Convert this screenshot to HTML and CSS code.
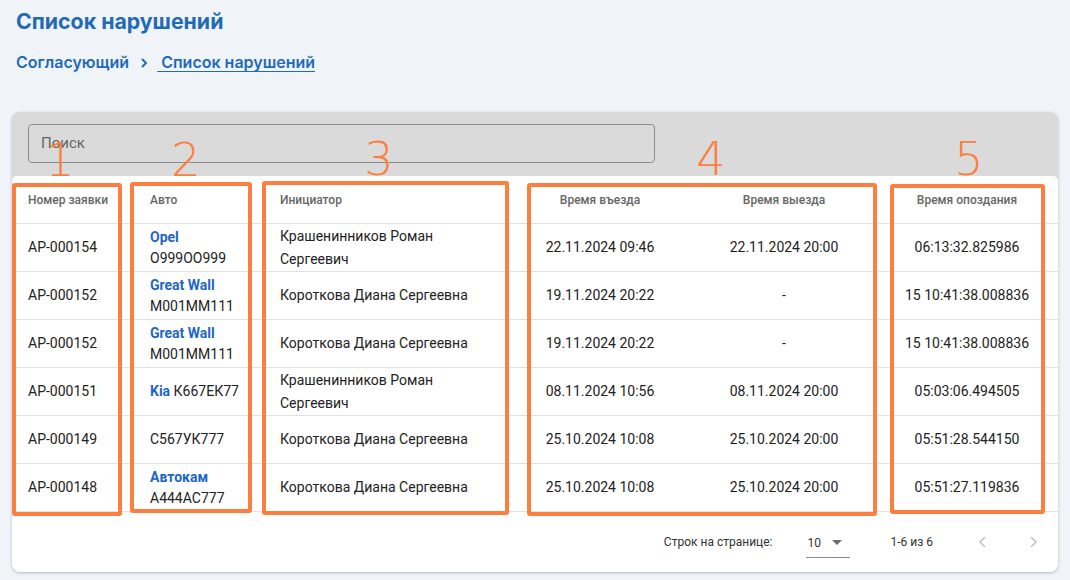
FILE: index.html
```html
<!DOCTYPE html>
<html lang="ru">
<head>
<meta charset="utf-8">
<title>Список нарушений</title>
<link rel="stylesheet" href="styles.css">
</head>
<body>
<div class="page">
  <h1 class="title">Список нарушений</h1>
  <nav class="crumbs">
    <span class="crumb">Согласующий</span>
    <svg class="crumb-sep" width="10" height="12" viewBox="0 0 10 12"><path d="M3 2 L7 6 L3 10" fill="none" stroke="#1f6bb8" stroke-width="2"/></svg>
    <span class="crumb current">&nbsp;Список нарушений</span>
  </nav>

  <section class="card">
    <div class="toolbar">
      <div class="search">Поиск</div>
    </div>
    <div class="paper">
      <table class="grid">
        <colgroup>
          <col class="c1"><col class="c2"><col class="c3"><col class="c4"><col class="c5"><col class="c6">
        </colgroup>
        <thead>
          <tr>
            <th>Номер заявки</th>
            <th>Авто</th>
            <th>Инициатор</th>
            <th class="ctr">Время въезда</th>
            <th class="ctr">Время выезда</th>
            <th class="ctr">Время опоздания</th>
          </tr>
        </thead>
        <tbody>
          <tr>
            <td>АР-000154</td>
            <td class="car"><span class="brand">Opel</span><br>О999ОО999</td>
            <td class="who">Крашенинников Роман Сергеевич</td>
            <td class="ctr">22.11.2024 09:46</td>
            <td class="ctr">22.11.2024 20:00</td>
            <td class="ctr">06:13:32.825986</td>
          </tr>
          <tr>
            <td>АР-000152</td>
            <td class="car"><span class="brand">Great Wall</span><br>М001ММ111</td>
            <td class="who">Короткова Диана Сергеевна</td>
            <td class="ctr">19.11.2024 20:22</td>
            <td class="ctr">-</td>
            <td class="ctr">15 10:41:38.008836</td>
          </tr>
          <tr>
            <td>АР-000152</td>
            <td class="car"><span class="brand">Great Wall</span><br>М001ММ111</td>
            <td class="who">Короткова Диана Сергеевна</td>
            <td class="ctr">19.11.2024 20:22</td>
            <td class="ctr">-</td>
            <td class="ctr">15 10:41:38.008836</td>
          </tr>
          <tr>
            <td>АР-000151</td>
            <td class="car"><span class="brand">Kia</span> К667ЕК77</td>
            <td class="who">Крашенинников Роман Сергеевич</td>
            <td class="ctr">08.11.2024 10:56</td>
            <td class="ctr">08.11.2024 20:00</td>
            <td class="ctr">05:03:06.494505</td>
          </tr>
          <tr>
            <td>АР-000149</td>
            <td class="car">С567УК777</td>
            <td class="who">Короткова Диана Сергеевна</td>
            <td class="ctr">25.10.2024 10:08</td>
            <td class="ctr">25.10.2024 20:00</td>
            <td class="ctr">05:51:28.544150</td>
          </tr>
          <tr>
            <td>АР-000148</td>
            <td class="car"><span class="brand">Автокам</span><br>А444АС777</td>
            <td class="who">Короткова Диана Сергеевна</td>
            <td class="ctr">25.10.2024 10:08</td>
            <td class="ctr">25.10.2024 20:00</td>
            <td class="ctr">05:51:27.119836</td>
          </tr>
        </tbody>
      </table>
      <div class="pager">
        <span class="pager-label">Строк на странице:</span>
        <div class="rows-select">
          <span>10</span>
          <svg width="10" height="5" viewBox="0 0 10 5"><path d="M0 0 L10 0 L5 5 Z" fill="#6b6b6b"/></svg>
        </div>
        <span class="pager-range">1-6 из 6</span>
        <button class="nav-btn" type="button" aria-label="Назад"><svg width="10" height="14" viewBox="0 0 10 14"><path d="M7 2 L2 7 L7 12" fill="none" stroke="#c4c4c4" stroke-width="1.6"/></svg></button>
        <button class="nav-btn" type="button" aria-label="Вперёд"><svg width="10" height="14" viewBox="0 0 10 14"><path d="M3 2 L8 7 L3 12" fill="none" stroke="#c4c4c4" stroke-width="1.6"/></svg></button>
      </div>
    </div>
  </section>

  <div class="marks">
    <div class="box b1"></div>
    <div class="box b2"></div>
    <div class="box b3"></div>
    <div class="box b4"></div>
    <div class="box b5"></div>
    <div class="num n1">1</div>
    <div class="num n2">2</div>
    <div class="num n3">3</div>
    <div class="num n4">4</div>
    <div class="num n5">5</div>
  </div>
</div>
</body>
</html>
```
FILE: styles.css
```css
html, body {
  margin: 0;
  padding: 0;
  background: #f0f4f8;
}
body {
  font-family: Roboto, "Liberation Sans", Arial, sans-serif;
  color: #222;
  width: 1070px;
  height: 580px;
  overflow: hidden;
}
.page {
  position: relative;
  padding: 6px 12px 0;
}
.title {
  margin: 0 0 0 4px;
  font-family: Inter, Roboto, sans-serif;
  font-size: 21.3px;
  line-height: 30px;
  font-weight: 700;
  color: #1f6bb8;
}
.crumbs {
  margin: 14px 0 0 4px;
  height: 24px;
  display: flex;
  align-items: center;
  font-family: Inter, Roboto, sans-serif;
  font-size: 16px;
  font-weight: 600;
  color: #1f6bb8;
}
.crumb-sep {
  margin: 2px 8px 0 10px;
}
.crumb.current {
  text-decoration: underline;
  text-underline-offset: 3px;
}
.card {
  margin-top: 38px;
  width: 1046px;
  background: #dadada;
  border-radius: 8px;
  box-shadow: 0 1px 3px rgba(0,0,0,0.25);
}
.toolbar {
  padding: 12px 16px 13px;
}
.search {
  box-sizing: border-box;
  width: 627px;
  height: 39px;
  border: 1px solid #8c8c8c;
  border-radius: 4px;
  padding-left: 12px;
  line-height: 37px;
  font-size: 15px;
  color: #666;
}
.paper {
  background: #fff;
  border-radius: 5px 5px 8px 8px;
}
.grid {
  width: 1046px;
  border-collapse: collapse;
  table-layout: fixed;
}
.c1 { width: 122px; }
.c2 { width: 130px; }
.c3 { width: 244px; }
.c4 { width: 184px; }
.c5 { width: 184px; }
.c6 { width: 182px; }
.grid th {
  height: 47px;
  padding: 0 16px;
  text-align: left;
  font-size: 12px;
  font-weight: 500;
  color: #666;
  border-bottom: 1px solid #e2e2e2;
  white-space: nowrap;
}
.grid td {
  height: 47px;
  padding: 0 16px;
  font-size: 14px;
  line-height: 23px;
  color: #222;
  border-bottom: 1px solid #e2e2e2;
}
.grid td.car {
  line-height: 21px;
}
.grid .ctr {
  text-align: center;
  padding: 0 4px;
}
.brand {
  color: #1e66c4;
  font-weight: 700;
}
.pager {
  height: 60px;
  display: flex;
  align-items: center;
  justify-content: flex-end;
  padding-right: 13px;
  font-size: 12px;
  color: #333;
}
.pager-label {
  margin-right: 34px;
}
.rows-select {
  box-sizing: border-box;
  width: 44px;
  height: 30px;
  margin-top: 2px;
  display: flex;
  align-items: center;
  justify-content: space-between;
  padding: 0 0 0 1px;
  border-bottom: 1px solid #8a8a8a;
  margin-right: 40px;
}
.rows-select svg {
  margin-right: 8px;
}
.pager-range {
  margin-right: 38px;
}
.nav-btn {
  width: 24px;
  height: 24px;
  padding: 0;
  border: 0;
  background: none;
  display: flex;
  align-items: center;
  justify-content: center;
}
.nav-btn + .nav-btn {
  margin-left: 26px;
}
.marks {
  position: absolute;
  left: 0;
  top: 0;
  width: 1070px;
  height: 580px;
  pointer-events: none;
}
.box {
  position: absolute;
  box-sizing: border-box;
  border: 4px solid #fd7e3e;
  border-radius: 3px;
}
.b1 { left: 12px; top: 183px; width: 110px; height: 333px; }
.b2 { left: 130px; top: 182px; width: 122px; height: 331px; }
.b3 { left: 262px; top: 181px; width: 247px; height: 334px; }
.b4 { left: 527px; top: 183px; width: 350px; height: 333px; }
.b5 { left: 890px; top: 184px; width: 155px; height: 330px; }
.num {
  position: absolute;
  width: 40px;
  text-align: center;
  font-family: "DejaVu Sans", sans-serif;
  font-weight: 200;
  font-size: 46px;
  line-height: 1;
  color: #fd7e3e;
}
.n1 { left: 40px; top: 137px; }
.n2 { left: 166px; top: 137px; }
.n3 { left: 359px; top: 136px; }
.n4 { left: 691px; top: 136px; }
.n5 { left: 949px; top: 136px; }
```
